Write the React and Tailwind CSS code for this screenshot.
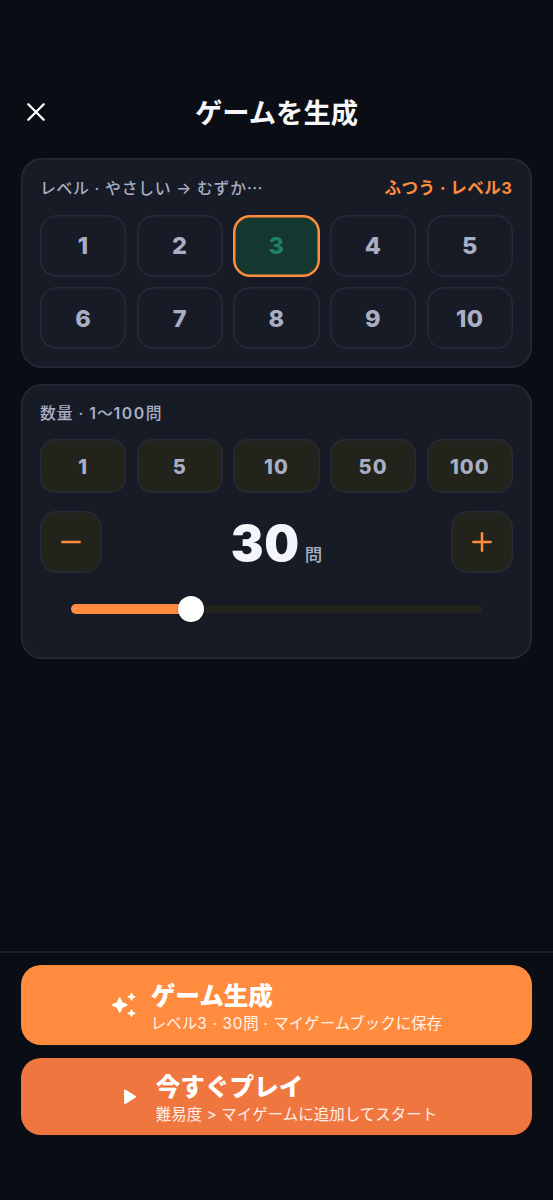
import { clsx } from 'clsx'

const LEVELS = [1, 2, 3, 4, 5, 6, 7, 8, 9, 10]
const COUNTS = [1, 5, 10, 50, 100]

function CloseIcon() {
  return (
    <svg viewBox="0 0 18 18" className="size-[18px]" fill="none" stroke="#fff" strokeWidth="2.3" strokeLinecap="round">
      <path d="M1.3 1.3l15.4 15.4M16.7 1.3L1.3 16.7" />
    </svg>
  )
}

function SparkleIcon() {
  return (
    <svg viewBox="0 0 26 26" className="size-[26px]" fill="#fff" stroke="#fff" strokeWidth="1.1" strokeLinejoin="round">
      <path d="M8.7 6.4l2 4.6 4.6 2-4.6 2-2 4.6-2-4.6-4.6-2 4.6-2z" strokeWidth="2" />
      <path d="M20.5 1.4l1.05 2.35L23.9 4.8l-2.35 1.05L20.5 8.2l-1.05-2.35L17.1 4.8l2.35-1.05z" />
      <path d="M20.5 17.8l1.05 2.35 2.35 1.05-2.35 1.05-1.05 2.35-1.05-2.35-2.35-1.05 2.35-1.05z" />
    </svg>
  )
}

function PlayIcon() {
  return (
    <svg viewBox="0 0 24 24" className="size-[26px]" fill="#fff" stroke="#fff" strokeWidth="1.5" strokeLinejoin="round">
      <path d="M8.2 5.8v12L17.7 11.8z" />
    </svg>
  )
}

function StepButton({ plus }) {
  return (
    <button className="flex size-[62px] items-center justify-center rounded-[17px] bg-[#22241c] shadow-[inset_0_0_0_1.5px_#262a39]">
      <svg viewBox="0 0 20 20" className="size-5" stroke="#ff8c3e" strokeWidth="2.5" strokeLinecap="round">
        <path d="M1.3 10h17.4" />
        {plus && <path d="M10 1.3v17.4" />}
      </svg>
    </button>
  )
}

function Card({ className, children }) {
  return (
    <section className={clsx('rounded-[21px] bg-[#171b25] px-[19px] shadow-[inset_0_0_0_1.5px_#262a38]', className)}>
      {children}
    </section>
  )
}

export default function App() {
  const level = 3
  const count = 30

  return (
    <div
      lang="ja"
      className="flex h-[1200px] w-[553px] flex-col bg-[#0a0d14] font-['Inter','Noto_Sans_CJK_JP',sans-serif] text-[#a9aec4]"
    >
      <header className="grid h-[158px] grid-cols-[1fr_auto_1fr] items-center px-[27px] pt-[66px]">
        <button className="justify-self-start">
          <CloseIcon />
        </button>
        <h1 className="pt-[3px] text-[27.3px] leading-9 font-bold text-[#f6f7fb]">ゲームを生成</h1>
      </header>

      <main className="flex flex-1 flex-col gap-4 px-[21px]">
        <Card className="h-[210px] pt-[18px]">
          <div className="flex h-6 items-center justify-between whitespace-nowrap">
            <p className="text-[15.8px] font-medium tracking-[0.75px]">
              レベル · やさしい → むずか<span className="font-['Noto_Sans_CJK_JP',sans-serif]">…</span>
            </p>
            <p className="pr-px text-[16.5px] font-bold tracking-[0.5px] text-[#ff8c3e]">
              ふつう · レベル<span className="-mr-[0.5px]">3</span>
            </p>
          </div>
          <div className="mt-[15px] grid grid-cols-5 gap-[10.3px]">
            {LEVELS.map((n) => (
              <button
                key={n}
                className={clsx(
                  'h-[62px] rounded-[17px] text-[23.5px] font-extrabold tracking-[0.5px]',
                  n === level
                    ? 'bg-[#14382f] text-[#1f8062] shadow-[inset_0_0_0_2.5px_#ff8c3e]'
                    : 'shadow-[inset_0_0_0_1.5px_#262a39]',
                )}
              >
                {n}
              </button>
            ))}
          </div>
        </Card>

        <Card className="h-[275px] pt-[17px]">
          <p className="h-6 text-[15.8px] leading-6 font-medium tracking-[0.9px]">
            数量 · <span className="font-semibold">1</span>
            <span className="font-['Noto_Sans_CJK_JP',sans-serif]">〜</span>
            <span className="font-semibold tracking-[1.5px]">100</span>問
          </p>
          <div className="mt-[14px] grid grid-cols-5 gap-[10.3px]">
            {COUNTS.map((n) => (
              <button
                key={n}
                className="h-[54px] rounded-[15px] bg-[#22241c] pt-px text-[20px] font-extrabold tracking-[1.1px] shadow-[inset_0_0_0_1.5px_#262a39]"
              >
                {n}
              </button>
            ))}
          </div>
          <div className="mt-[18px] flex h-[62px] items-center justify-between">
            <StepButton />
            <div className="flex items-baseline gap-[5px] pt-[3px]">
              <span className="text-[49px] leading-[60px] font-black tracking-[0.7px] text-[#f4f5fa]">{count}</span>
              <span className="text-[17.5px] font-medium">問</span>
            </div>
            <StepButton plus />
          </div>
          <div className="relative mx-[31px] mt-[23px] flex h-[26px] items-center">
            <div className="h-2 w-full rounded-full bg-[#22241c]" />
            <div
              className="absolute left-0 h-[10.5px] rounded-full bg-[#ff8c3e]"
              style={{ width: `${((count - 1) / 99) * 100}%` }}
            />
            <div
              className="absolute size-[26px] -translate-x-1/2 rounded-full bg-white shadow-[0_1px_3px_rgba(0,0,0,0.35)]"
              style={{ left: `${((count - 1) / 99) * 100}%` }}
            />
          </div>
        </Card>
      </main>

      <footer className="flex h-[249px] flex-col gap-[13px] border-t-2 border-[#1d202a] px-[21px] pt-3">
        <button className="flex h-20 items-center justify-center gap-[14px] rounded-[20px] bg-[#ff8c3e] text-left text-white">
          <SparkleIcon />
          <span className="flex flex-col pt-[6px] whitespace-nowrap">
            <span className="text-[24.6px] leading-[30px] font-black">ゲーム生成</span>
            <span className="pt-px text-[15.4px] leading-6 tracking-[0.1px] text-white/90">
              レベル<span className="tracking-[0.7px]">3 · 30</span>問<span className="tracking-[0.5px]"> · </span>
              マイゲームブックに保存
            </span>
          </span>
        </button>
        <button className="flex h-[77px] items-center justify-center gap-[14px] rounded-[20px] bg-[#f07640] text-left text-white">
          <PlayIcon />
          <span className="flex flex-col pt-[5px] whitespace-nowrap">
            <span className="text-[24.6px] leading-[30px] font-black">今すぐプレイ</span>
            <span className="pt-px text-[15.4px] leading-6 tracking-[0.1px] text-white/90">難易度 &gt; マイゲームに追加してスタート</span>
          </span>
        </button>
      </footer>
    </div>
  )
}
